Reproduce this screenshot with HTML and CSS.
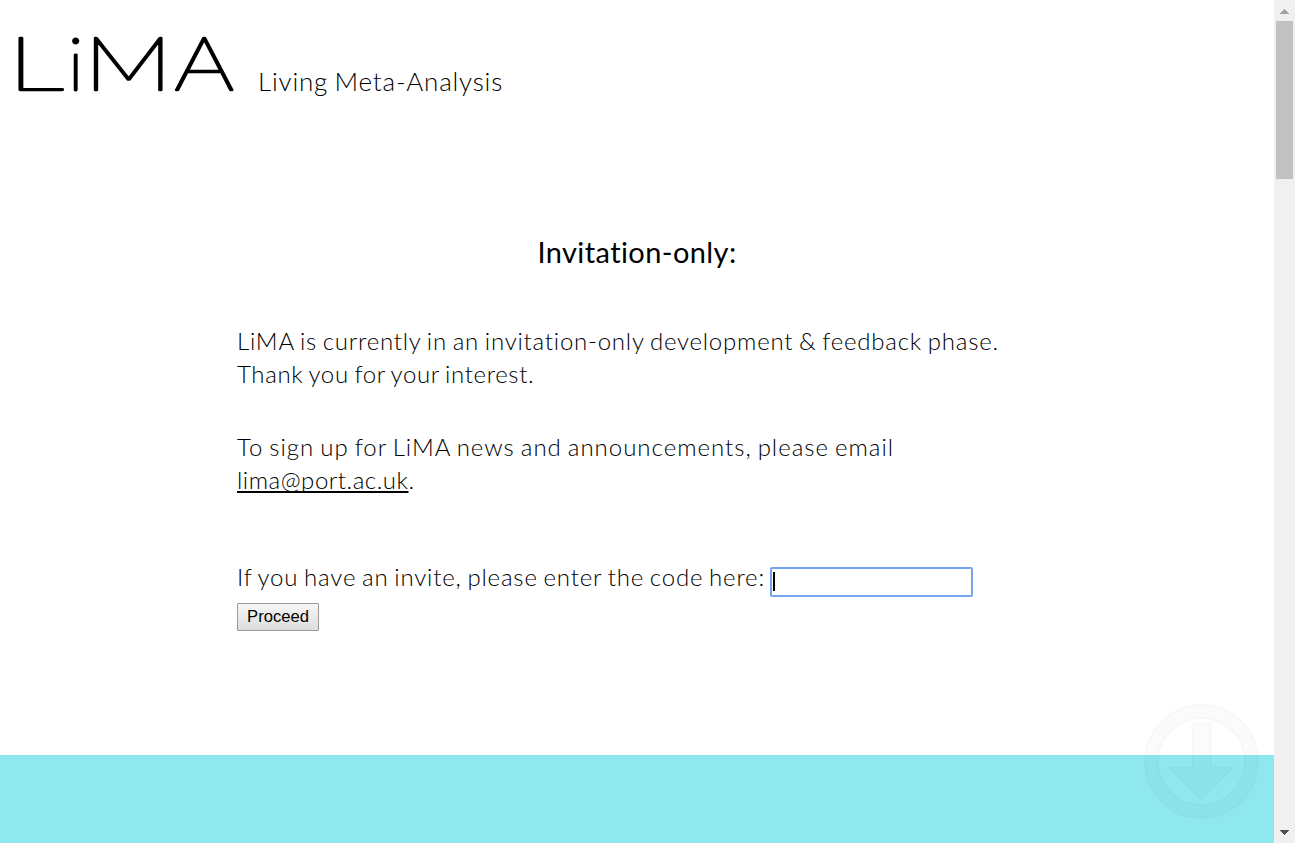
FILE: index.html
```
<!DOCTYPE html>
<html lang="en">
<head>
<meta charset="utf-8">
<title>LiMA – Living Meta-Analysis</title>
<link rel="stylesheet" href="styles.css">
</head>
<body>
<div class="page">
  <header class="header">
    <svg class="logo" width="222" height="64" viewBox="0 0 222 64" role="img" aria-label="LiMA">
      <text class="logo-letter" transform="translate(-8 57.800) scale(1.54 .99)">L</text>
      <text class="logo-letter" transform="translate(53 57.800) scale(1 .96)">i</text>
      <text class="logo-letter" transform="translate(69 57.800) scale(1.34 .99)">M</text>
      <text class="logo-letter" transform="translate(159.500 57.800) scale(1.26 .99)">A</text>
    </svg>
    <span class="tagline">Living Meta-Analysis</span>
  </header>
  <main class="intro">
    <h1 class="title">Invitation-only:</h1>
    <p class="text"><span class="l1">LiMA is currently in an invitation-only development &amp; feedback phase.</span><br><span class="l2">Thank you for your interest.</span></p>
    <p class="text"><span class="l3">To sign up for LiMA news and announcements, please email</span><br><a class="mail" href="#">lima@port.ac.uk</a>.</p>
    <form class="invite">
      <label class="field"><span class="l5">If you have an invite, please enter the code here:</span><span class="code"><span class="caret"></span></span></label>
      <button class="proceed" type="button">Proceed</button>
    </form>
  </main>
  <section class="band"></section>
</div>
<aside class="scrollbar">
  <svg class="arrow" width="21" height="21" viewBox="0 0 21 21" shape-rendering="crispEdges"><path fill="#a3a3a3" d="M6 14h9v-1h-1v-1h-1v-1h-1v-1h-1v-1h-1v1h-1v1h-1v1h-1v1h-1z"/></svg>
  <div class="thumb"></div>
  <svg class="arrow" width="21" height="21" viewBox="0 0 21 21" shape-rendering="crispEdges"><path fill="#505050" d="M6 8h9v1h-1v1h-1v1h-1v1h-1v1h-1v-1h-1v-1h-1v-1h-1v-1h-1z"/></svg>
</aside>
<svg class="scroll-down" width="116" height="116" viewBox="0 0 116 116" fill="#000" fill-opacity=".016" stroke="#000" stroke-opacity=".024" stroke-width="2">
  <path fill-rule="evenodd" d="M58.500 2a56.500 56.500 0 1 0 0 113a56.500 56.500 0 1 0 0-113zM58.500 15a43.500 43.500 0 1 1 0 87a43.500 43.500 0 1 1 0-87z"/>
  <path d="M49.500 20.500H67.500V64.500H90.500L58.500 96L26.500 64.500H49.500z"/>
</svg>
</body>
</html>
```
FILE: styles.css
```
body {
  margin: 0;
  height: 844px;
  display: flex;
  overflow: hidden;
  background: #fff;
  color: #000;
  font: 300 24px/33px Lato, sans-serif;
}
.page {
  width: 1274px;
  display: flex;
  flex-direction: column;
}
.header {
  height: 187px;
  padding: 32px 0 0 15px;
  box-sizing: border-box;
  display: flex;
  align-items: flex-start;
}
.logo {
  flex: none;
  overflow: visible;
}
.logo-letter {
  font: 100 74px Lato, sans-serif;
  stroke: #000;
  stroke-width: 3px;
  stroke-linejoin: round;
  vector-effect: non-scaling-stroke;
}
.tagline {
  margin: 33px 0 0 21px;
  font-size: 26px;
  line-height: 32px;
  letter-spacing: .8px;
  word-spacing: -1.5px;
}
.intro {
  width: 800px;
  height: 568px;
  margin-left: 237px;
}
.title {
  margin: 45px 0 0;
  text-align: center;
  font-size: 29px;
  line-height: 40px;
  font-weight: 400;
  letter-spacing: .4px;
}
.text {
  margin: 52px 0 0;
  white-space: nowrap;
  word-spacing: -1.5px;
}
.text + .text {
  margin-top: 40px;
}
.l1 {
  letter-spacing: .77px;
}
.l2 {
  letter-spacing: .65px;
}
.l3 {
  letter-spacing: .99px;
}
.mail {
  color: inherit;
  letter-spacing: .53px;
  text-decoration: underline;
  text-decoration-thickness: 2px;
  text-underline-offset: 2px;
  text-decoration-skip-ink: none;
}
.invite {
  margin-top: 64px;
}
.field {
  display: flex;
  white-space: nowrap;
}
.l5 {
  width: 533px;
  letter-spacing: .81px;
  word-spacing: -1.5px;
}
.code {
  box-sizing: border-box;
  width: 203px;
  height: 30px;
  margin-top: 7px;
  padding: 3px 1px;
  border: 2px solid #76a5ee;
  border-radius: 2px;
}
.caret {
  display: block;
  width: 2px;
  height: 19px;
  background: #000;
}
.proceed {
  display: block;
  width: 82px;
  height: 28px;
  margin-top: 6px;
  padding: 0 0 1px;
  border: 1px solid #999;
  border-radius: 1px;
  background: linear-gradient(#f6f6f6, #ddd);
  color: #000;
  font: 16.600px "Liberation Sans", Arial, sans-serif;
}
.band {
  height: 88px;
  background: #8fe8ee;
}
.scrollbar {
  width: 21px;
  height: 843px;
  background: #f0f0f0;
  display: flex;
  flex-direction: column;
}
.thumb {
  width: 17px;
  height: 158px;
  margin: 0 2px auto;
  background: #c1c1c1;
}
.scroll-down {
  position: absolute;
  left: 1143px;
  top: 703px;
}
```
